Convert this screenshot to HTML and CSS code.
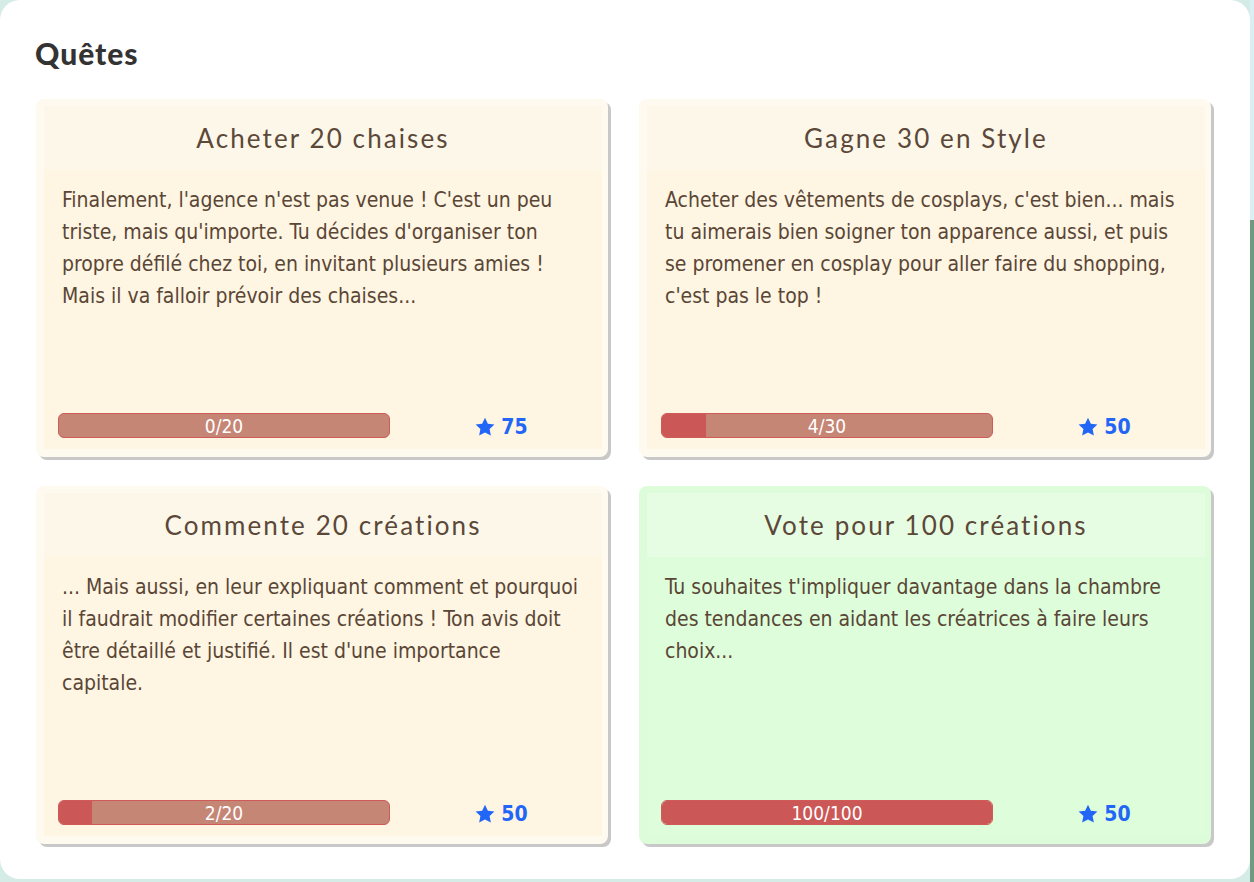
FILE: index.html
```html
<!DOCTYPE html>
<html lang="fr">
<head>
<meta charset="utf-8">
<title>Quêtes</title>
<link rel="stylesheet" href="styles.css">
</head>
<body>
<div class="panel">
  <h1 class="heading">Quêtes</h1>
  <div class="grid">
    <div class="card">
      <div class="card-head">Acheter 20 chaises</div>
      <div class="card-body">
        <p class="desc">Finalement, l'agence n'est pas venue ! C'est un peu triste, mais qu'importe. Tu décides d'organiser ton propre défilé chez toi, en invitant plusieurs amies ! Mais il va falloir prévoir des chaises...</p>
        <div class="footer">
          <div class="bar"><div class="fill" style="width:0%"></div><span class="bar-text">0/20</span></div>
          <div class="reward"><svg class="star" viewBox="0 0 24 24"><path d="M12 1.8l3.1 6.6 7.2.9-5.3 5 1.4 7.1L12 17.9l-6.4 3.5 1.4-7.1-5.3-5 7.2-.9z"/></svg><span>75</span></div>
        </div>
      </div>
    </div>
    <div class="card">
      <div class="card-head">Gagne 30 en Style</div>
      <div class="card-body">
        <p class="desc">Acheter des vêtements de cosplays, c'est bien... mais tu aimerais bien soigner ton apparence aussi, et puis se promener en cosplay pour aller faire du shopping, c'est pas le top !</p>
        <div class="footer">
          <div class="bar"><div class="fill" style="width:13.33%"></div><span class="bar-text">4/30</span></div>
          <div class="reward"><svg class="star" viewBox="0 0 24 24"><path d="M12 1.8l3.1 6.6 7.2.9-5.3 5 1.4 7.1L12 17.9l-6.4 3.5 1.4-7.1-5.3-5 7.2-.9z"/></svg><span>50</span></div>
        </div>
      </div>
    </div>
    <div class="card">
      <div class="card-head">Commente 20 créations</div>
      <div class="card-body">
        <p class="desc">... Mais aussi, en leur expliquant comment et pourquoi il faudrait modifier certaines créations ! Ton avis doit être détaillé et justifié. Il est d'une importance capitale.</p>
        <div class="footer">
          <div class="bar"><div class="fill" style="width:10%"></div><span class="bar-text">2/20</span></div>
          <div class="reward"><svg class="star" viewBox="0 0 24 24"><path d="M12 1.8l3.1 6.6 7.2.9-5.3 5 1.4 7.1L12 17.9l-6.4 3.5 1.4-7.1-5.3-5 7.2-.9z"/></svg><span>50</span></div>
        </div>
      </div>
    </div>
    <div class="card card-done">
      <div class="card-head">Vote pour 100 créations</div>
      <div class="card-body">
        <p class="desc">Tu souhaites t'impliquer davantage dans la chambre des tendances en aidant les créatrices à faire leurs choix...</p>
        <div class="footer">
          <div class="bar"><div class="fill" style="width:100%"></div><span class="bar-text">100/100</span></div>
          <div class="reward"><svg class="star" viewBox="0 0 24 24"><path d="M12 1.8l3.1 6.6 7.2.9-5.3 5 1.4 7.1L12 17.9l-6.4 3.5 1.4-7.1-5.3-5 7.2-.9z"/></svg><span>50</span></div>
        </div>
      </div>
    </div>
  </div>
</div>
</body>
</html>
```
FILE: styles.css
```css
html {
  background:
    linear-gradient(#d8eff3 0, #d8eff3 220px, #6f9a80 220px) right top / 4px 100% no-repeat,
    #d5ebe5;
}
body {
  margin: 0;
  width: 1254px;
  height: 882px;
  overflow: hidden;
}
.panel {
  width: 1250px;
  height: 879px;
  box-sizing: border-box;
  background: #ffffff;
  border-radius: 20px;
  padding: 30px 35px 0 35px;
}
.heading {
  margin: 0 0 23px 0;
  font-family: "Lato", "DejaVu Sans", sans-serif;
  font-weight: 900;
  font-size: 30px;
  line-height: 46px;
  letter-spacing: 1px;
  color: #333333;
}
.grid {
  display: grid;
  grid-template-columns: 572px 572px;
  grid-template-rows: 358px 358px;
  column-gap: 31px;
  row-gap: 29px;
  margin-left: 1px;
}
.card {
  background: #fffaef;
  border-radius: 8px;
  box-shadow: 3px 3px 0 #c8c8c8;
  padding: 7px 6px 8px 8px;
  display: flex;
  flex-direction: column;
}
.card-head {
  height: 64px;
  flex: none;
  background: #fdf7ea;
  display: flex;
  align-items: center;
  justify-content: center;
  font-family: "Lato", "DejaVu Sans", sans-serif;
  font-size: 26px;
  color: #5b4838;
  letter-spacing: 2.1px;
}
.card-body {
  flex: 1;
  background: #fef5e2;
  padding: 14px 18px 10px 18px;
  display: flex;
  flex-direction: column;
}
.card-done { background: #ddfdda; }
.card-done .card-head { background: #e7fde3; }
.card-done .card-body { background: #defedb; }
.desc {
  margin: 0;
  font-family: "DejaVu Sans Condensed", "DejaVu Sans", sans-serif;
  font-size: 21px;
  line-height: 32px;
  color: #5a4636;
}
.footer {
  margin-top: auto;
  display: flex;
  align-items: center;
  margin-left: -4px;
}
.bar {
  position: relative;
  width: 330px;
  height: 23px;
  border: 1px solid #cf5a57;
  border-radius: 6px;
  background: #c58676;
  overflow: hidden;
}
.fill {
  height: 100%;
  background: #cc5757;
}
.bar-text {
  position: absolute;
  inset: 0;
  display: flex;
  align-items: center;
  justify-content: center;
  font-family: "DejaVu Sans Condensed", "DejaVu Sans", sans-serif;
  font-size: 19px;
  color: #ffffff;
}
.reward {
  flex: 1;
  display: flex;
  align-items: center;
  justify-content: center;
  gap: 5px;
  padding-left: 28px;
  padding-top: 3px;
  font-family: "DejaVu Sans Condensed", "DejaVu Sans", sans-serif;
  font-weight: bold;
  font-size: 21px;
  color: #2266f7;
}
.star {
  width: 22px;
  height: 22px;
  fill: #2266f7;
}
```
